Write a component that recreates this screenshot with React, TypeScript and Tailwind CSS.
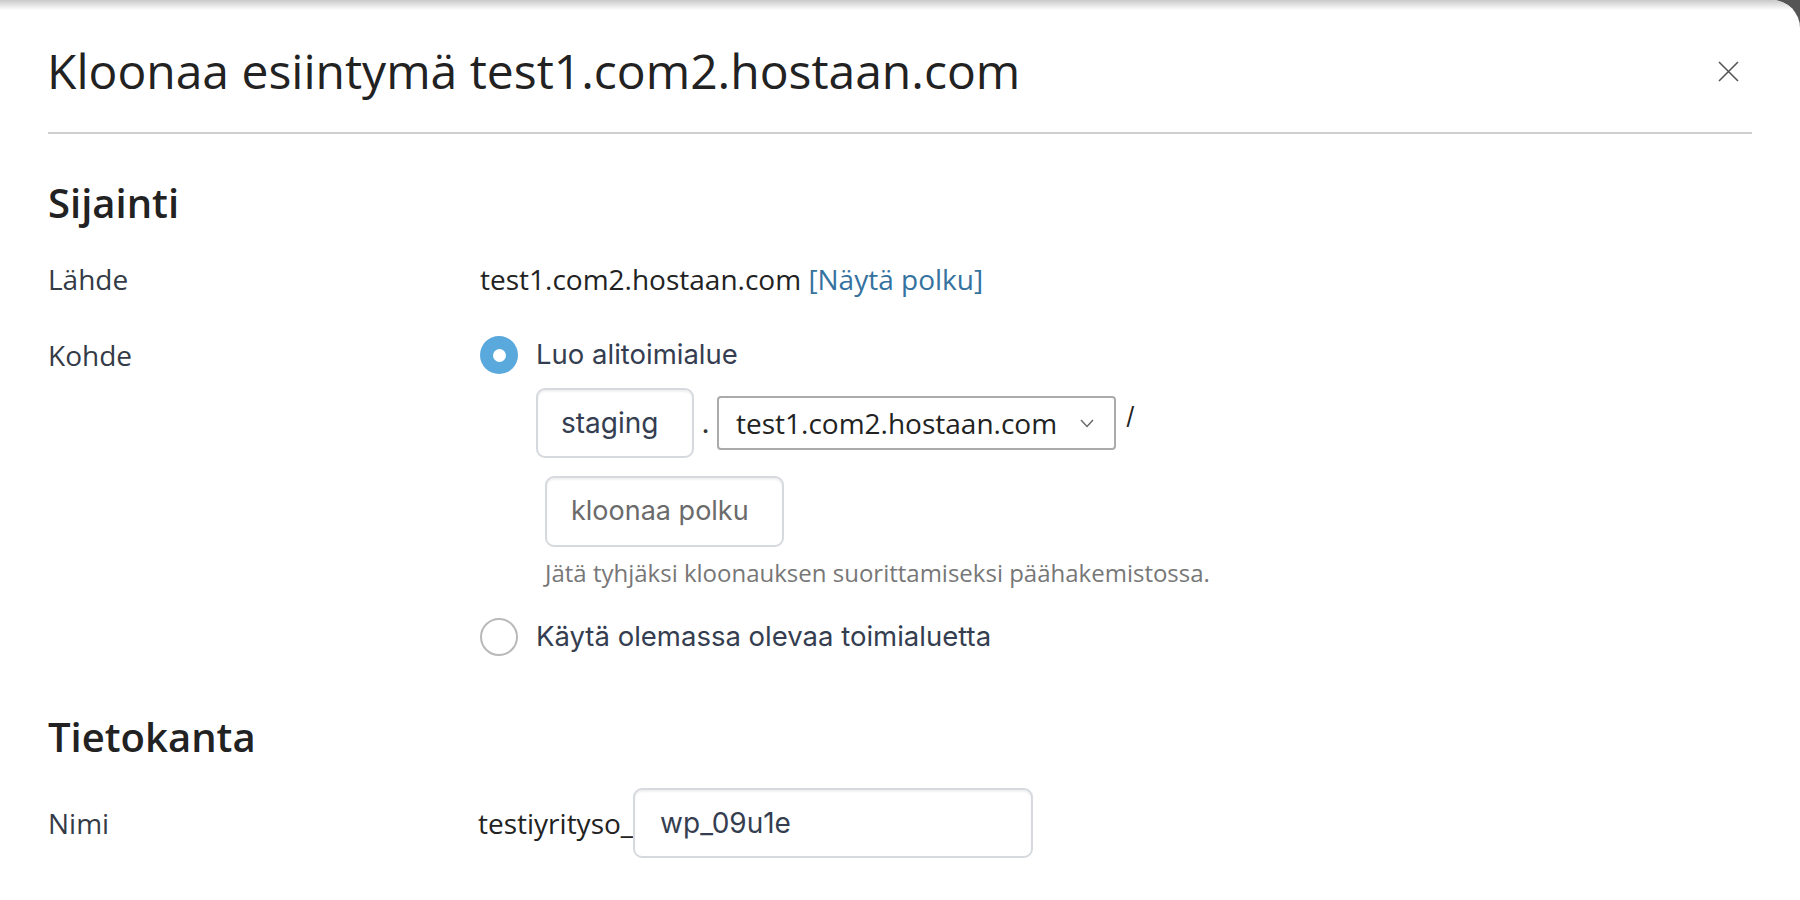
export default function App() {
  return (
    <div className="w-[1800px] h-[900px] overflow-hidden bg-[#555555]">
      <div
        className="w-full h-full bg-white rounded-tr-[28px] overflow-hidden"
        style={{ fontFamily: '"Open Sans", "Liberation Sans", sans-serif' }}
      >
        <div className="h-[10px] bg-gradient-to-b from-[#c9c9c9] to-white" />

        <div className="mx-[48px] h-[124px] flex items-center justify-between border-b-2 border-[#cfcfcf]">
          <h1 className="text-[48px] leading-[60px] text-[#222] -ml-[1px]">
            Kloonaa esiintymä test1.com2.hostaan.com
          </h1>
          <button className="w-[40px] h-[40px] flex items-center justify-center mr-[4px]">
            <svg width="21" height="21" viewBox="0 0 21 21">
              <path d="M1 1 L20 20 M20 1 L1 20" stroke="#555" strokeWidth="1.6" fill="none" />
            </svg>
          </button>
        </div>

        <div className="px-[48px]">
          <h2 className="mt-[45px] text-[40px] leading-[48px] font-semibold text-[#222]">Sijainti</h2>

          <div className="flex mt-[34px] text-[28px] leading-[36px]">
            <div className="w-[432px] text-[#343b46]">Lähde</div>
            <div className="text-[#222]">
              test1.com2.hostaan.com <a className="text-[#3572a0]">[Näytä polku]</a>
            </div>
          </div>

          <div className="flex mt-[39px]">
            <div className="w-[432px] h-[38px] flex items-center text-[28px] text-[#343b46]">Kohde</div>
            <div className="flex flex-col" style={{ fontFamily: 'Inter, "Liberation Sans", sans-serif' }}>
              <label className="flex items-center gap-[18px] h-[38px]">
                <span className="w-[38px] h-[38px] rounded-full bg-[#5aa9dc] flex items-center justify-center">
                  <span className="w-[13px] h-[13px] rounded-full bg-white" />
                </span>
                <span className="text-[27.5px] text-[#353e50]">Luo alitoimialue</span>
              </label>

              <div className="flex items-center ml-[56px] mt-[14px]">
                <div className="w-[158px] h-[70px] rounded-[9px] border-2 border-[#d6d9de] shadow-[inset_0_2px_2px_rgba(0,0,0,0.06)] flex items-center pl-[23px] text-[28px] text-[#353e50]">
                  staging
                </div>
                <span className="w-[23px] text-center text-[28px] text-[#333]">.</span>
                <div
                  className="w-[399px] h-[54px] rounded-[4px] border-2 border-[#ababab] flex items-center justify-between pl-[17px] pr-[20px] text-[28px] text-[#222]"
                  style={{ fontFamily: '"Open Sans", "Liberation Sans", sans-serif' }}
                >
                  <span>test1.com2.hostaan.com</span>
                  <svg width="14" height="9" viewBox="0 0 14 9">
                    <polyline points="1,1 7,7.5 13,1" stroke="#666" strokeWidth="1.4" fill="none" />
                  </svg>
                </div>
                <span className="ml-[10px] text-[24px] text-[#222] -mt-[14px]">/</span>
              </div>

              <div className="ml-[65px] mt-[18px] w-[239px] h-[71px] rounded-[9px] border-2 border-[#d6d9de] shadow-[inset_0_2px_2px_rgba(0,0,0,0.06)] flex items-center pl-[24px] text-[27px] text-[#6b6b6b]">
                kloonaa polku
              </div>

              <p
                className="ml-[65px] mt-[11px] text-[24px] leading-[30px] text-[#777]"
                style={{ fontFamily: '"Open Sans", "Liberation Sans", sans-serif' }}
              >
                Jätä tyhjäksi kloonauksen suorittamiseksi päähakemistossa.
              </p>

              <label className="flex items-center gap-[18px] h-[38px] mt-[30px]">
                <span className="w-[38px] h-[38px] rounded-full border-2 border-[#b9b9b9] bg-white" />
                <span className="text-[27.5px] text-[#353e50]">Käytä olemassa olevaa toimialuetta</span>
              </label>
            </div>
          </div>

          <h2 className="mt-[57px] text-[40px] leading-[48px] font-semibold text-[#222]">Tietokanta</h2>

          <div className="flex items-center mt-[27px]">
            <div className="w-[432px] text-[28px] text-[#343b46]">Nimi</div>
            <div className="flex items-center">
              <span className="text-[28px] text-[#222] -ml-[2px]">testiyrityso_</span>
              <div
                className="w-[400px] h-[70px] rounded-[9px] border-2 border-[#d6d9de] shadow-[inset_0_2px_2px_rgba(0,0,0,0.06)] flex items-center pl-[25px] text-[28px] text-[#353e50]"
                style={{ fontFamily: 'Inter, "Liberation Sans", sans-serif' }}
              >
                wp_09u1e
              </div>
            </div>
          </div>
        </div>
      </div>
    </div>
  );
}
